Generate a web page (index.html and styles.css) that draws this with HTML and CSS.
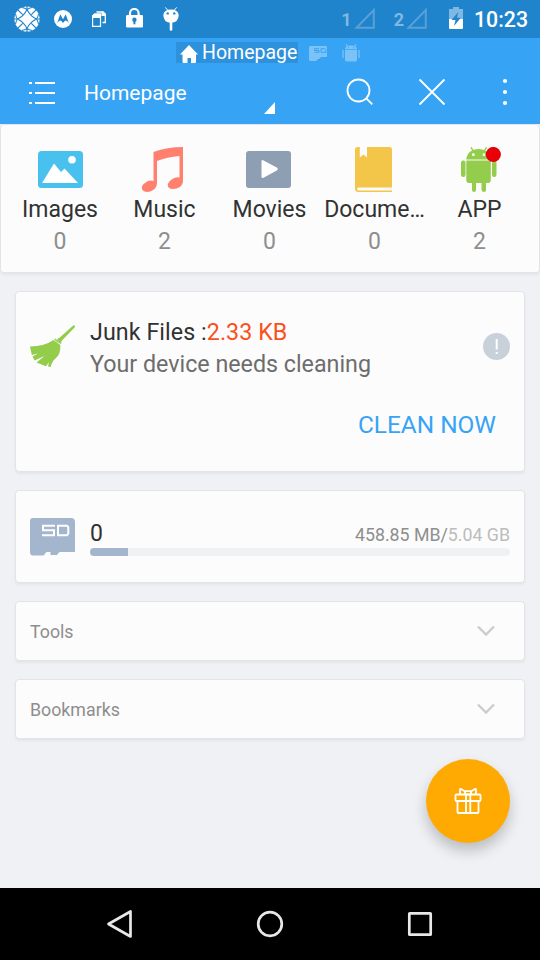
FILE: index.html
```html
<!DOCTYPE html>
<html lang="en">
<head>
<meta charset="utf-8">
<title>Homepage</title>
<link rel="stylesheet" href="styles.css">
</head>
<body>
<div class="statusbar">
  <div class="notifications">
    <svg width="26" height="26" viewBox="0 0 26 26"><circle cx="13" cy="13" r="12.6" fill="#fff"/><g fill="none" stroke="#2084cc" stroke-width="1.1"><path d="M13 0V3.5M13 22.5V26M0 13H3.5M22.5 13H26M3.5 3.5L8.7 8.7M17.3 17.3L22.5 22.5M22.5 3.5L17.3 8.7M8.7 17.3L3.5 22.5"/><path d="M13 3.5Q16 10 22.5 13Q16 16 13 22.5Q10 16 3.5 13Q10 10 13 3.5ZM8 1.5Q11 2 13 3.5Q15 2 18 1.5M8 24.5Q11 24 13 22.5Q15 24 18 24.5M1.5 8Q2 11 3.5 13Q2 15 1.5 18M24.5 8Q24 11 22.5 13Q24 15 24.5 18"/></g></svg>
    <svg width="18" height="18" viewBox="0 0 18 18"><circle cx="9" cy="9" r="9" fill="#fff"/><path d="M3.2 13L6.3 4.2L9 9.2L11.7 4.2L14.8 13Q13 10.2 11.7 10.5Q10 11 9 13Q8 11 6.3 10.5Q5 10.2 3.2 13Z" fill="#2084cc"/></svg>
    <svg width="14" height="16" viewBox="0 0 14 16"><path d="M5 1.5V1H11L13.3 3V11.5H10.5" fill="none" stroke="#fff" stroke-width="1.3"/><path d="M9.5 .5H11L14 3.5V5H9.5Z" fill="#fff"/><path d="M.6 15.4V5L2.4 3H8.5V15.4Z" fill="none" stroke="#fff" stroke-width="1.2"/><path d="M0 7V5L2.5 2.5H9V7Z" fill="#fff"/></svg>
    <svg width="17" height="20" viewBox="0 0 17 20"><path d="M4 8V5.3a4.3 4.3 0 0 1 8.6 0V8" fill="none" stroke="#fff" stroke-width="2.2"/><rect y="7" width="17" height="12.5" rx="1.3" fill="#fff"/><circle cx="8.4" cy="11.8" r="2.2" fill="#2084cc"/><path d="M7.4 12H9.4V16.3H7.4Z" fill="#2084cc"/></svg>
    <svg width="16" height="24" viewBox="0 0 16 24"><path d="M.3 8Q1 2.5 8 2.5T15.7 8Q15.5 15.7 8 15.7T.3 8Z" fill="#fff"/><path d="M2.3 .4L5 3.5M13.7 .4L11 3.5" stroke="#fff"/><path d="M8 15V22.5" stroke="#fff" stroke-width="2.6" stroke-linecap="round"/><circle cx="4.7" cy="6.4" r="1.2" fill="#2084cc"/><circle cx="11.3" cy="6.4" r="1.2" fill="#2084cc"/></svg>
  </div>
  <div class="system">
    <span class="sim">1</span>
    <svg class="signal" width="21" height="21" viewBox="0 0 21 21"><path d="M2.5 19.8H19.8V2Z"/></svg>
    <span class="sim">2</span>
    <svg class="signal" width="21" height="21" viewBox="0 0 21 21"><path d="M2.5 19.8H19.8V2Z"/></svg>
    <svg class="battery" width="14" height="22" viewBox="0 0 14 22"><path d="M0 2H4V0H10V2H14V12H0Z" fill="#7fb8e2"/><path d="M0 12H14V21Q14 22 13 22H1Q0 22 0 21Z" fill="#fff"/><path d="M9.4 5L2.5 13H6.5L5 19L11.8 10.7H7.9Z" fill="#2084cc"/></svg>
    <span class="clock">10:23</span>
  </div>
</div>
<header class="appbar">
  <div class="pages">
    <div class="page-current">
      <svg width="18" height="18" viewBox="0 0 18 18"><path d="M9 0L18 9.5H16V17Q16 18 15 18H11V13H7.5V18H3.5Q2.5 18 2.5 17V9.5H0Z" fill="#fff"/></svg>
      <span>Homepage</span>
    </div>
    <svg class="page-sd" width="18" height="15" viewBox="0 0 18 15"><path d="M1 0H17L18 1V11H12L10 13H9L7 15H1L0 14V1Z" fill="#7bc2f8"/><path d="M10 2.7H5.5V4.5H10V6.3H5.5M12 2.7H16L17 3.7V6.3H12Z" fill="none" stroke="#37a3f5"/></svg>
    <svg class="page-app" width="18" height="18" viewBox="0 0 18 18"><path d="M3 5.2Q3.5 1.5 9 1.5T15 5.2ZM3 6H15V16L14 17.5H4L3 16Z" fill="#7bc2f8"/><path d="M1 6V14M17 6V14M4 .3L5.5 2.5M14 .3L12.5 2.5" stroke="#7bc2f8" stroke-width="1.3"/><path d="M6 3.7H7M11 3.7H12" stroke="#37a3f5"/></svg>
  </div>
  <div class="toolbar">
    <svg width="26" height="24" viewBox="0 0 26 24"><path d="M0 2H3M6 2H26M0 12H3M6 12H26M0 22H3M6 22H26" stroke="#fff" stroke-width="2"/></svg>
    <div class="spinner"><span>Homepage</span><svg width="11" height="12" viewBox="0 0 11 12"><path d="M11 0V12H0Z" fill="#fff"/></svg></div>
    <svg class="search" width="28" height="28" viewBox="0 0 28 28"><circle cx="12.5" cy="12.5" r="11" fill="none" stroke="#fff" stroke-width="1.8"/><path d="M20.3 20.3L26.3 26.3" stroke="#fff" stroke-width="1.8"/></svg>
    <svg class="close" width="28" height="28" viewBox="0 0 28 28"><path d="M1.5 1.5L26.5 26.5M26.5 1.5L1.5 26.5" stroke="#fff" stroke-width="1.8"/></svg>
    <svg class="more" width="6" height="28" viewBox="0 0 6 28"><g fill="#fff"><circle cx="3" cy="3" r="2.1"/><circle cx="3" cy="14" r="2.1"/><circle cx="3" cy="25" r="2.1"/></g></svg>
  </div>
</header>
<main>
  <section class="categories">
    <div class="category">
      <svg width="46" height="46" viewBox="0 0 46 46"><rect x="1" y="4" width="45" height="37" rx="3.5" fill="#48c1ee"/><path d="M5 36L17 16.5L24 25L27.5 21.5L41 36Z" fill="#fff"/><circle cx="35" cy="12.7" r="3.8" fill="#fff"/></svg>
      <span class="name">Images</span><span class="count">0</span>
    </div>
    <div class="category">
      <svg width="46" height="46" viewBox="0 0 46 46"><path d="M12.5 5Q26 0 42 0V34C42 39 37 42 32 42C26 42 25 37 30 33Q34 29.5 38.5 30.5V9Q26 10 16 14V36C16 42 10 45 6 45C0 45-1 39 4 36Q8 32.5 12.5 34Z" fill="#ff806e"/></svg>
      <span class="name">Music</span><span class="count">2</span>
    </div>
    <div class="category">
      <svg width="46" height="46" viewBox="0 0 46 46"><rect y="4" width="45" height="37" rx="3" fill="#8e9fb4"/><path d="M15.5 14.5Q15.5 12.3 17.5 13.4L31.2 20.7Q32.5 22 31.2 23.2L17.5 30.7Q15.5 31.6 15.5 29.5Z" fill="#fff"/></svg>
      <span class="name">Movies</span><span class="count">0</span>
    </div>
    <div class="category">
      <svg width="46" height="46" viewBox="0 0 46 46"><path d="M6.8 0H38.5Q41 0 41 2.5V45H7.5Q4 45 4 41.5V2.8Q4 0 6.8 0Z" fill="#f3c548"/><path d="M8.8 0H16V10.5L12.4 7.5L8.8 10.5ZM41 40.5H7.5Q6 40.7 6 42T7.5 43.5H41Z" fill="#fcfcfc"/></svg>
      <span class="name">Docume…</span><span class="count">0</span>
    </div>
    <div class="category">
      <svg width="46" height="46" viewBox="0 0 46 46"><g fill="#94cc4b"><path d="M10.3 12.5C11 5.5 16 2 22.5 2S34 5.5 34.8 12.5ZM10.3 13.5H34.8V33Q34.8 36 32 36H13Q10.3 36 10.3 33Z"/><rect x="5" y="13.5" width="4.5" height="16.5" rx="2.2"/><rect x="36" y="13.5" width="4.5" height="16.5" rx="2.2"/><path d="M16 34H20V43Q20 45 18 45T16 43ZM25.5 34H30V43Q30 45 28 45T25.5 43Z"/></g><path d="M15 .3L17.5 4.5M30.5 .3L28 4.5" stroke="#94cc4b" stroke-width="1.4"/><circle cx="17.3" cy="7.7" r="1.4" fill="#fff"/><circle cx="28" cy="7.7" r="1.4" fill="#fff"/><circle cx="37.3" cy="7.5" r="7.6" fill="#e80008"/></svg>
      <span class="name">APP</span><span class="count">2</span>
    </div>
  </section>
  <section class="card junk">
    <div class="junk-row">
      <svg class="broom" width="46" height="46" viewBox="0 0 46 46"><path d="M43.5 1.2Q45.5 1.5 45 3L32 16.5Q31.7 18 30 18.5L27 16Q27.5 14 29.5 13.8Z" fill="#94cc4b"/><path d="M23.5 16L30.3 21Q31 30 25.5 34.5Q21.5 38 20.8 43L18 42.5L19 38L16 42.3L6.5 38.5L14.5 32L4.5 36.5L2.5 32.5L8 29.5L1.8 31L0 22.5Q14 22.5 23.5 16Z" fill="#94cc4b"/><path d="M24.8 14.8Q27 18 31.3 19.3" fill="none" stroke="#94cc4b" stroke-width="1.5"/></svg>
      <div class="junk-text"><div class="junk-title">Junk Files :<span>2.33 KB</span></div><div class="junk-sub">Your device needs cleaning</div></div>
      <svg class="alert" width="27" height="28" viewBox="0 0 27 28"><circle cx="13.5" cy="13.5" r="13.5" fill="#c8d0da"/><path d="M13.7 6V16.5M13.7 19V21" stroke="#fff" stroke-width="2"/></svg>
    </div>
    <div class="clean">CLEAN NOW</div>
  </section>
  <section class="card storage">
    <svg width="45" height="38" viewBox="0 0 45 38"><path d="M3 0H41Q45 0 45 4V34H30.5Q29 34 28.5 35L27 37H20.5V34H17Q15.5 34 15 36L13.5 37.5H3Q0 37.5 0 34V3Q0 0 3 0Z" fill="#a4b6ce"/><path d="M25 7.7H13V12.3H24V17.2H12M28 7.7H37L38.3 9.2V15.7L37 17.2H28Z" fill="none" stroke="#fff" stroke-width="2"/></svg>
    <div class="usage">
      <div class="usage-row"><span class="volume">0</span><span class="size">458.85 MB/<span>5.04 GB</span></span></div>
      <div class="meter"><div class="meter-fill"></div></div>
    </div>
  </section>
  <section class="card fold"><span>Tools</span><svg width="18" height="12" viewBox="0 0 18 12"><path d="M1 1.5L9 9.5L17 1.5"/></svg></section>
  <section class="card fold"><span>Bookmarks</span><svg width="18" height="12" viewBox="0 0 18 12"><path d="M1 1.5L9 9.5L17 1.5"/></svg></section>
  <div class="fab"><svg width="28" height="28" viewBox="0 0 28 28"><g fill="none" stroke="#fff" stroke-width="1.8" stroke-linejoin="round"><rect x="1.5" y="7.5" width="25" height="6.5" rx="1"/><path d="M3.5 14V25Q3.5 26 4.5 26H23.5Q24.5 26 24.5 25V14M12 7.5V26M16.3 7.5V26M12 5L7 2Q6 1.5 6 3V7.5M16 5L21 2Q22 1.5 22 3V7.5"/><rect x="11" y="4.2" width="6" height="3.3" rx="1"/></g></svg></div>
</main>
<nav class="navbar">
  <svg width="30" height="30" viewBox="0 0 30 30"><path d="M3.5 15L25.5 2.5V27.5Z"/></svg>
  <svg width="30" height="30" viewBox="0 0 30 30"><circle cx="15" cy="15" r="11.8"/></svg>
  <svg width="30" height="30" viewBox="0 0 30 30"><rect x="4.3" y="4.3" width="21.4" height="21.4" rx=".5"/></svg>
</nav>
</body>
</html>
```
FILE: styles.css
```css
* { box-sizing: border-box; }
body {
  margin: 0;
  width: 540px;
  height: 960px;
  overflow: hidden;
  display: flex;
  flex-direction: column;
  background: #eff1f4;
  font-family: Roboto, sans-serif;
}
svg { display: block; flex: none; }
.statusbar {
  height: 38px;
  background: #2084cc;
  display: flex;
  justify-content: space-between;
  align-items: center;
  padding: 0 12px 0 14px;
}
.notifications { display: flex; align-items: center; }
.notifications svg:nth-child(2) { margin-left: 14px; }
.notifications svg:nth-child(3) { margin-left: 20px; }
.notifications svg:nth-child(4) { margin-left: 20px; margin-top: -2px; }
.notifications svg:nth-child(5) { margin-left: 20px; }
.system { display: flex; align-items: center; padding-top: 1px; }
.sim { font-size: 18px; font-weight: 700; color: #7fb8e2; line-height: 20px; }
.signal { margin: -2px 19px 0 2px; }
.signal path { fill: none; stroke: #57a1d8; stroke-width: 2; }
.battery { margin: -3px 11px 0 3px; }
.clock { font-size: 21.3px; font-weight: 500; color: #fff; line-height: 24px; }
.appbar { height: 86px; background: #37a3f5; color: #fff; }
.pages { height: 29px; padding: 4px 0 0 176px; display: flex; align-items: flex-start; }
.page-current {
  width: 122px;
  height: 21px;
  padding-left: 4px;
  display: flex;
  align-items: center;
  gap: 4px;
  background: #2e91dc;
  font-size: 19.5px;
  line-height: 21px;
}
.page-current svg { margin-top: 2px; }
.page-sd { margin: 4px 0 0 11px; }
.page-app { margin: 2px 0 0 15px; }
.toolbar { height: 57px; display: flex; padding: 11px 32px 0 29px; }
.toolbar > svg:first-child { margin-top: 3px; }
.spinner {
  width: 191px;
  margin-left: 29px;
  display: flex;
  justify-content: space-between;
  font-size: 21px;
  line-height: 30px;
}
.spinner svg { margin-top: 24px; }
.search { margin-left: 71px; }
.close { margin-left: 44px; }
.more { margin-left: 56px; }
main { height: 764px; position: relative; }
.categories, .card {
  background: #fcfcfc;
  border: 1px solid #e2e4e7;
  border-radius: 4px;
  box-shadow: 0 2px 3px rgba(0, 0, 0, .05);
}
.categories { height: 149px; display: flex; padding: 22px 6px 0; }
.category { width: 105px; display: flex; flex-direction: column; align-items: center; }
.category svg { margin-right: 1px; }
.category:first-child { padding-left: 1px; }
.name { margin-top: 2px; font-size: 23px; line-height: 30px; color: #323232; white-space: nowrap; }
.count { margin-top: 2px; font-size: 23px; line-height: 30px; color: #8e8e8e; }
.card { margin: 18px 15px 0; padding: 0 14px; }
.junk { height: 181px; }
.junk-row { display: flex; padding-top: 24px; }
.broom { margin-top: 8px; }
.junk-text { margin-left: 14px; flex: 1; font-size: 23.25px; line-height: 32px; }
.junk-title { color: #323232; letter-spacing: .07px; }
.junk-title span { color: #f9501c; }
.junk-sub { color: #6d6d6d; }
.alert { margin-top: 17px; }
.clean { margin: 29px 14px 0 0; text-align: right; font-size: 24.4px; line-height: 32px; color: #37a3f5; }
.storage { height: 93px; display: flex; align-items: flex-start; padding-top: 27px; }
.usage { flex: 1; margin-left: 15px; }
.usage-row { height: 30px; display: flex; justify-content: space-between; }
.volume { font-size: 23px; line-height: 31px; color: #323232; }
.size { font-size: 17.75px; line-height: 34px; color: #8e8e8e; }
.size span { color: #bcbcbc; }
.meter { height: 8px; border-radius: 4px; background: #eff1f3; overflow: hidden; }
.meter-fill { width: 38px; height: 8px; background: #a4b6ce; }
.fold {
  height: 60px;
  display: flex;
  align-items: center;
  justify-content: space-between;
  padding-right: 29px;
  font-size: 17.8px;
  color: #8e8e8e;
}
.fold path { fill: none; stroke: #ccc; stroke-width: 2.3; }
.fab {
  position: absolute;
  right: 30px;
  bottom: 45px;
  width: 84px;
  height: 84px;
  border-radius: 50%;
  background: #ffaa03;
  box-shadow: 0 8px 14px rgba(0, 0, 0, .22);
  display: flex;
  align-items: center;
  justify-content: center;
}
.navbar {
  height: 72px;
  background: #000;
  display: flex;
  justify-content: space-between;
  align-items: center;
  padding: 0 105px;
}
.navbar svg * { fill: none; stroke: #e8e8e8; stroke-width: 2.7; stroke-linejoin: round; }
```
